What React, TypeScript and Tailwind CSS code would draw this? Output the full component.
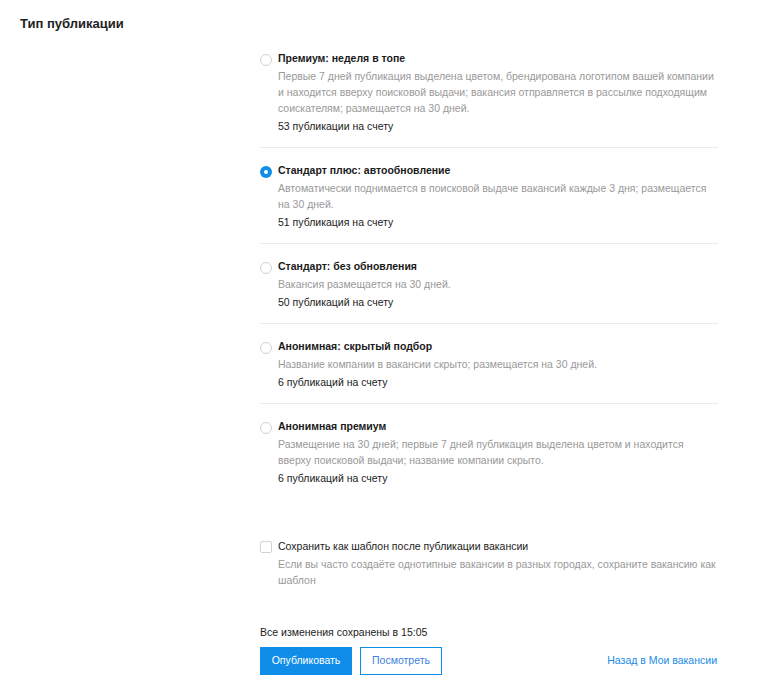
import React, { useState } from 'react';

const options = [
  {
    id: 'premium',
    title: 'Премиум: неделя в топе',
    desc: 'Первые 7 дней публикация выделена цветом, брендирована логотипом вашей компании и находится вверху поисковой выдачи; вакансия отправляется в рассылке подходящим соискателям; размещается на 30 дней.',
    count: '53 публикации на счету',
  },
  {
    id: 'standard-plus',
    title: 'Стандарт плюс: автообновление',
    desc: 'Автоматически поднимается в поисковой выдаче вакансий каждые 3 дня; размещается на 30 дней.',
    count: '51 публикация на счету',
  },
  {
    id: 'standard',
    title: 'Стандарт: без обновления',
    desc: 'Вакансия размещается на 30 дней.',
    count: '50 публикаций на счету',
  },
  {
    id: 'anonymous',
    title: 'Анонимная: скрытый подбор',
    desc: 'Название компании в вакансии скрыто; размещается на 30 дней.',
    count: '6 публикаций на счету',
  },
  {
    id: 'anonymous-premium',
    title: 'Анонимная премиум',
    desc: 'Размещение на 30 дней; первые 7 дней публикация выделена цветом и находится вверху поисковой выдачи; название компании скрыто.',
    count: '6 публикаций на счету',
  },
];

function Radio({ checked }: { checked: boolean }) {
  return checked ? (
    <span className="mt-[6px] flex h-[12px] w-[12px] shrink-0 items-center justify-center rounded-full bg-[#0f8de8]">
      <span className="h-[4px] w-[4px] rounded-full bg-white" />
    </span>
  ) : (
    <span className="mt-[6px] h-[12px] w-[12px] shrink-0 rounded-full border border-[#d2d2d2] bg-white" />
  );
}

export default function App() {
  const [selected, setSelected] = useState('standard-plus');
  const [saveTemplate, setSaveTemplate] = useState(false);

  return (
    <div className="min-h-screen bg-white font-['Liberation_Sans',Arial,sans-serif] text-[#222]">
      <div className="pl-5 pt-[14px]">
        <h1 className="text-[13px] font-bold leading-5">Тип публикации</h1>
      </div>

      <div className="ml-[260px] mt-[2px] w-[458px]">
        {/* Publication types */}
        <div className="divide-y divide-[#ebebeb]">
          {options.map((o) => (
            <label
              key={o.id}
              onClick={() => setSelected(o.id)}
              className="flex cursor-pointer gap-[6px] pb-[11px] pt-[12px]"
            >
              <Radio checked={selected === o.id} />
              <div className="w-[442px]">
                <p className="text-[10.5px] font-bold leading-5 text-[#1a1a1a]">{o.title}</p>
                <p className="text-[10.5px] leading-4 text-[#999]">{o.desc}</p>
                <p className="text-[10.5px] leading-5">{o.count}</p>
              </div>
            </label>
          ))}
        </div>

        {/* Template checkbox */}
        <label
          className="mt-[37px] flex cursor-pointer gap-[6px]"
          onClick={() => setSaveTemplate(!saveTemplate)}
        >
          <span
            className={`mt-[5px] h-[12px] w-[12px] shrink-0 rounded-[2px] border ${
              saveTemplate ? 'border-[#0f8de8] bg-[#0f8de8]' : 'border-[#d2d2d2] bg-white'
            }`}
          />
          <div className="w-[442px]">
            <p className="text-[10.5px] leading-5">Сохранить как шаблон после публикации вакансии</p>
            <p className="text-[10.5px] leading-4 text-[#999]">
              Если вы часто создаёте однотипные вакансии в разных городах, сохраните вакансию как шаблон
            </p>
          </div>
        </label>

        {/* Footer */}
        <p className="mt-[34px] text-[10.5px] leading-5">Все изменения сохранены в 15:05</p>
        <div className="mt-[5px] flex w-[457px] items-center justify-between">
          <div className="flex gap-2">
            <button className="h-[28px] w-[92px] bg-[#0f8de8] text-[10.5px] text-white">Опубликовать</button>
            <button className="h-[28px] w-[82px] border border-[#0f8de8] bg-white text-[10.5px] text-[#3b7fe0]">
              Посмотреть
            </button>
          </div>
          <a href="#" className="text-[10.5px] text-[#1a8be6]">
            Назад в Мои вакансии
          </a>
        </div>
      </div>
    </div>
  );
}
